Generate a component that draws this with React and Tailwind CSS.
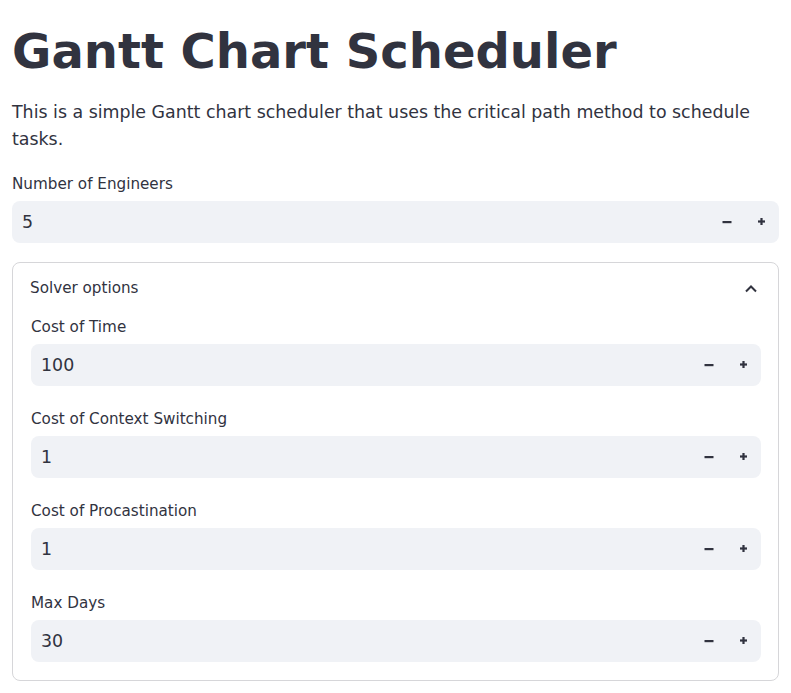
import { useState } from 'react';

function MinusIcon() {
  return (
    <svg width="10" height="10" viewBox="0 0 10 10" fill="#31333f">
      <rect x="0.5" y="4" width="9" height="2.2" />
    </svg>
  );
}

function PlusIcon() {
  return (
    <svg width="9" height="9" viewBox="0 0 9 9" fill="#31333f">
      <rect x="1" y="3.4" width="7" height="2.2" />
      <rect x="3.4" y="1" width="2.2" height="7" />
    </svg>
  );
}

function NumberField({ label, value, onChange, className = '' }) {
  return (
    <div className={className}>
      <div className="h-[26px] mb-[5px] pt-[4px] flex items-center text-[15.2px]">{label}</div>
      <div className="h-[42px] flex items-center bg-[#f0f2f6] rounded-lg">
        <input
          type="text"
          value={value}
          onChange={(e) => onChange(e.target.value)}
          className="flex-1 min-w-0 h-full bg-transparent pl-[10px] text-[17.4px] text-[#31333f] outline-none"
        />
        <button
          type="button"
          onClick={() => onChange(String((parseInt(value) || 0) - 1))}
          className="w-[35px] h-full flex items-center justify-center"
        >
          <MinusIcon />
        </button>
        <button
          type="button"
          onClick={() => onChange(String((parseInt(value) || 0) + 1))}
          className="w-[35px] h-full flex items-center justify-center"
        >
          <PlusIcon />
        </button>
      </div>
    </div>
  );
}

export default function App() {
  const [engineers, setEngineers] = useState('5');
  const [costTime, setCostTime] = useState('100');
  const [costSwitch, setCostSwitch] = useState('1');
  const [costProc, setCostProc] = useState('1');
  const [maxDays, setMaxDays] = useState('30');
  const [open, setOpen] = useState(true);

  return (
    <div className="min-h-screen bg-white px-3 font-['DejaVu_Sans',sans-serif] text-[#31333f]">
      <h1 className="pt-[23px] text-[48px] font-bold leading-[1.2]">Gantt Chart Scheduler</h1>
      <p className="mt-[18px] text-[17.4px] leading-[27px]">
        This is a simple Gantt chart scheduler that uses the critical path method to schedule tasks.
      </p>

      <NumberField className="mt-[17px]" label="Number of Engineers" value={engineers} onChange={setEngineers} />

      {/* Solver options expander */}
      <div className="mt-[19px] border border-[#d6d6d9] rounded-lg">
        <button
          type="button"
          onClick={() => setOpen(!open)}
          className="w-full h-[48px] pt-[4px] flex items-center justify-between pl-[17px] pr-[20px] text-[15.2px]"
        >
          <span>Solver options</span>
          <svg width="14" height="14" viewBox="0 0 14 14" fill="none" stroke="#31333f" strokeWidth="2">
            <path d={open ? 'M2 9.5L7 4.5L12 9.5' : 'M2 4.5L7 9.5L12 4.5'} />
          </svg>
        </button>
        {open && (
          <div className="pt-[2px] pb-[18px] pl-[18px] pr-[17px] flex flex-col gap-[19px]">
            <NumberField label="Cost of Time" value={costTime} onChange={setCostTime} />
            <NumberField label="Cost of Context Switching" value={costSwitch} onChange={setCostSwitch} />
            <NumberField label="Cost of Procastination" value={costProc} onChange={setCostProc} />
            <NumberField label="Max Days" value={maxDays} onChange={setMaxDays} />
          </div>
        )}
      </div>
    </div>
  );
}
